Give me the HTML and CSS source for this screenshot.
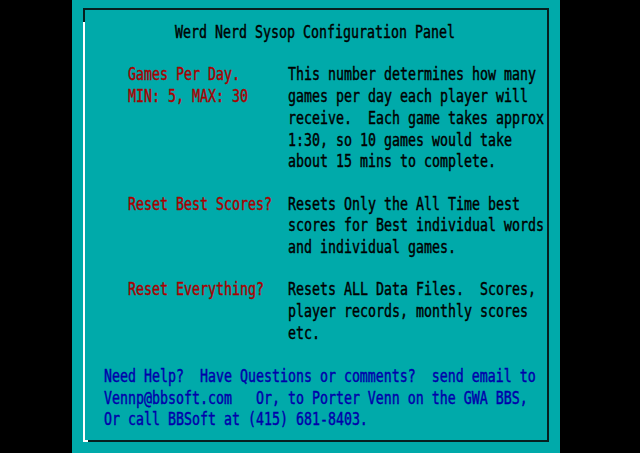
FILE: index.html
```html
<!DOCTYPE html>
<html>
<head>
<meta charset="utf-8">
<link rel="stylesheet" href="styles.css">
</head>
<body>
<div class="screen">
  <div class="panel">
    <div class="frame">
      <div class="content">
        <div class="title">Werd Nerd Sysop Configuration Panel</div>
        <div class="option">
          <div class="label">Games Per Day.
MIN: 5, MAX: 30</div>
          <div class="desc">This number determines how many
games per day each player will
receive.  Each game takes approx
1:30, so 10 games would take
about 15 mins to complete.</div>
        </div>
        <div class="option">
          <div class="label">Reset Best Scores?</div>
          <div class="desc">Resets Only the All Time best
scores for Best individual words
and individual games.</div>
        </div>
        <div class="option">
          <div class="label">Reset Everything?</div>
          <div class="desc">Resets ALL Data Files.  Scores,
player records, monthly scores
etc.</div>
        </div>
        <div class="help">Need Help?  Have Questions or comments?  send email to
Vennp@bbsoft.com   Or, to Porter Venn on the GWA BBS,
Or call BBSoft at (415) 681-8403.</div>
      </div>
    </div>
  </div>
</div>
</body>
</html>
```

FILE: styles.css
```css
html, body {
  margin: 0;
  padding: 0;
  background: #000;
}
.screen {
  width: 640px;
  height: 453px;
  display: flex;
  background: #000;
  overflow: hidden;
}
.panel {
  width: 488px;
  height: 453px;
  margin-left: 72px;
  background: #00aaaa;
  padding: 8px 0 0 11px;
  box-sizing: border-box;
}
.frame {
  position: relative;
  width: 466px;
  height: 434px;
  box-sizing: border-box;
  border-top: 2px solid #062020;
  border-right: 2px solid #062020;
  border-bottom: 2px solid #062020;
  border-left: 2px solid #ffffff;
}
.frame::before {
  content: "";
  position: absolute;
  left: -2px;
  top: -2px;
  width: 2px;
  height: 14px;
  background: #062020;
}
.frame::after {
  content: "";
  position: absolute;
  left: -2px;
  bottom: -2px;
  width: 5px;
  height: 2px;
  background: #ffffff;
}
.content {
  font-family: "DejaVu Sans Mono", "Liberation Mono", monospace;
  font-size: 13.29px;
  line-height: 16.82px;
  white-space: pre;
  color: #000;
  -webkit-text-stroke: 0.35px currentColor;
  padding-top: 9.7px;
  display: flex;
  flex-direction: column;
  gap: 16.82px;
  transform: scaleY(1.28);
  transform-origin: top left;
}
.title {
  text-align: center;
  margin-left: -2px;
}
.option {
  display: grid;
  grid-template-columns: 160px 1fr;
  padding-left: 43px;
}
.label {
  color: #aa0000;
}
.help {
  color: #0000aa;
  padding-left: 19px;
}
```
